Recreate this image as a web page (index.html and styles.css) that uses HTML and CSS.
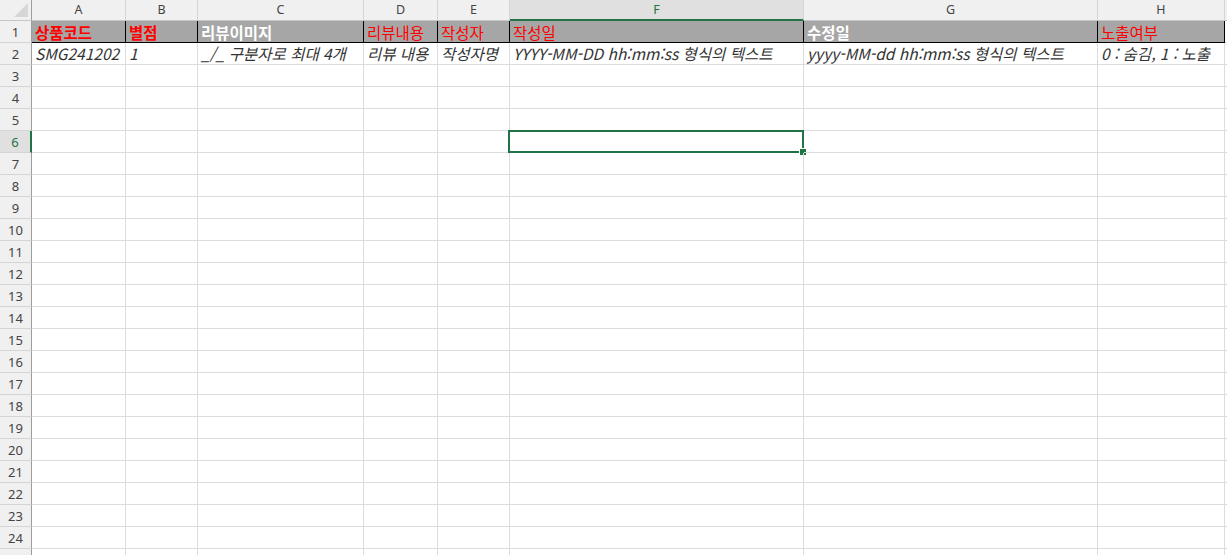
FILE: index.html
```html
<!DOCTYPE html>
<html lang="ko">
<head>
    <meta charset="UTF-8">
    <meta name="viewport" content="width=device-width, initial-scale=1.0">
    <title>리뷰 업로드 양식</title>
    <link rel="stylesheet" href="styles.css">
</head>
<body>

    <div class="sheet" id="sheet">
        <!-- column headers -->
        <div class="corner">
            <svg width="14" height="14" viewBox="0 0 14 14"><polygon points="14,0 14,14 0,14" fill="#d6d6d6"/></svg>
        </div>
        <div class="col-head">A</div>
        <div class="col-head">B</div>
        <div class="col-head">C</div>
        <div class="col-head">D</div>
        <div class="col-head">E</div>
        <div class="col-head active">F</div>
        <div class="col-head">G</div>
        <div class="col-head">H</div>
        <div class="col-head last"></div>

        <!-- row 1: field names -->
        <div class="row-head">1</div>
        <div class="cell title red bold">상품코드</div>
        <div class="cell title red bold">별점</div>
        <div class="cell title white bold">리뷰이미지</div>
        <div class="cell title red">리뷰내용</div>
        <div class="cell title red">작성자</div>
        <div class="cell title red">작성일</div>
        <div class="cell title white bold">수정일</div>
        <div class="cell title red">노출여부</div>
        <div class="cell last"></div>

        <!-- row 2: descriptions -->
        <div class="row-head">2</div>
        <div class="cell note">SMG241202</div>
        <div class="cell note">1</div>
        <div class="cell note">_/_ 구분자로 최대 4개</div>
        <div class="cell note">리뷰 내용</div>
        <div class="cell note">작성자명</div>
        <div class="cell note">YYYY-MM-DD hh:mm:ss 형식의 텍스트</div>
        <div class="cell note">yyyy-MM-dd hh:mm:ss 형식의 텍스트</div>
        <div class="cell note">0 : 숨김, 1 : 노출</div>
        <div class="cell last"></div>
    </div>

    <script>
        const sheet = document.getElementById('sheet');
        const columnCount = 9;  // A..H plus the sliver on the right
        const selectedRow = 6;
        const selectedCol = 5;  // F
        const lastVisibleRow = 24;

        // Empty rows 3..24, plus the top edge of row 25
        for (let r = 3; r <= lastVisibleRow + 1; r++) {
            const head = document.createElement('div');
            head.className = 'row-head' + (r === selectedRow ? ' active' : '');
            if (r <= lastVisibleRow) {
                head.textContent = r;
            }
            sheet.appendChild(head);

            for (let c = 0; c < columnCount; c++) {
                const cell = document.createElement('div');
                cell.className = 'cell' + (c === columnCount - 1 ? ' last' : '');
                if (r === selectedRow && c === selectedCol) {
                    cell.classList.add('selected');
                }
                sheet.appendChild(cell);
            }
        }
    </script>

</body>
</html>
```

FILE: styles.css
```css
html, body {
    margin: 0;
    padding: 0;
    background-color: #fff;
    overflow: hidden;
}

.sheet {
    display: grid;
    grid-template-columns: 32px 94px 72px 166px 74px 72px 294px 294px 127px 2px;
    grid-auto-rows: 22px;
    grid-template-rows: 21px;
    width: 1227px;
}

.corner {
    background-color: #f0f0f0;
    border-right: 1px solid #9d9d9d;
    border-bottom: 1px solid #c6c6c6;
    box-sizing: border-box;
    display: flex;
    align-items: flex-end;
    justify-content: flex-end;
    padding: 0 3px 3px 0;
}

.col-head {
    background-color: #f0f0f0;
    border-right: 1px solid #d4d4d4;
    border-bottom: 1px solid #c6c6c6;
    box-sizing: border-box;
    font-family: "Noto Sans", "Open Sans", sans-serif;
    font-size: 12.5px;
    color: #444;
    text-align: center;
    line-height: 19px;
}

.col-head.active {
    background-color: #e0e0e0;
    border-bottom: 2px solid #217346;
    color: #217346;
}

.col-head.last {
    border-right: none;
}

.row-head {
    background-color: #f0f0f0;
    border-right: 1px solid #9d9d9d;
    border-bottom: 1px solid #d4d4d4;
    box-sizing: border-box;
    font-family: "Noto Sans", "Open Sans", sans-serif;
    font-size: 13px;
    color: #444;
    text-align: center;
    line-height: 23px;
}

.row-head.active {
    background-color: #e0e0e0;
    border-right: 2px solid #217346;
    color: #217346;
}

.cell {
    position: relative;
    border-right: 1px solid #dcdcdc;
    border-bottom: 1px solid #dcdcdc;
    box-sizing: border-box;
    font-family: "Noto Sans CJK KR", "Noto Sans", sans-serif;
    font-size: 15.5px;
    line-height: 21px;
    padding: 0 3px;
    white-space: nowrap;
    overflow: hidden;
    color: #333;
}

.cell.last {
    border-right: none;
}

.cell.title {
    background-color: #a6a6a6;
    border-right: 1px solid #000;
    border-bottom: 1px solid #000;
    line-height: 22px;
}

.cell.title.red {
    color: #ff0000;
}

.cell.title.white {
    color: #fff;
}

.cell.bold {
    font-weight: bold;
}

.cell.note {
    font-style: italic;
    color: #333;
}

.cell.selected {
    overflow: visible;
}

/* selection frame drawn over the cell borders */
.cell.selected::before {
    content: "";
    position: absolute;
    left: -2px;
    top: -1px;
    right: -1px;
    bottom: -1px;
    border: 2px solid #217346;
}

.cell.selected::after {
    content: "";
    position: absolute;
    right: -3px;
    bottom: -3px;
    width: 6px;
    height: 6px;
    background-color: #217346;
    border-left: 1px solid #fff;
    border-top: 1px solid #fff;
}
```
